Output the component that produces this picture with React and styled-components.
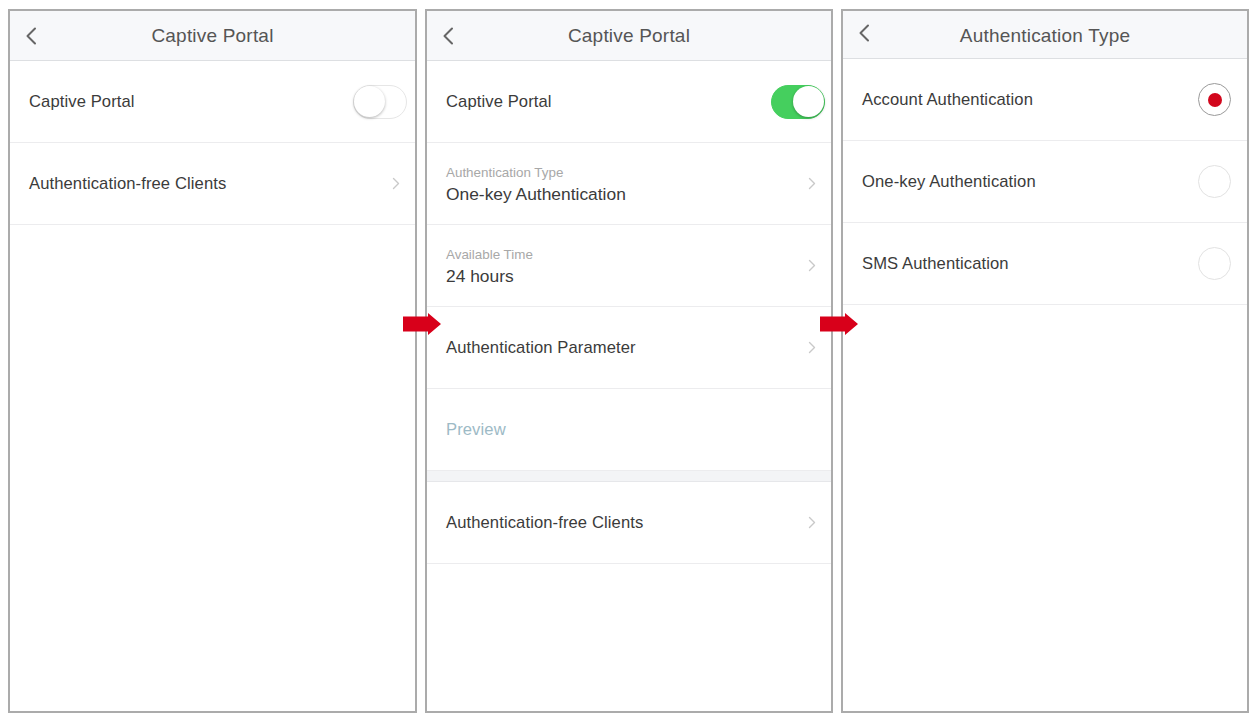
import React from "react";
import styled, { createGlobalStyle } from "styled-components";

const Global = createGlobalStyle`
  html, body { margin: 0; padding: 0; background: #ffffff; }
  body { font-family: "Liberation Sans", Arial, sans-serif; -webkit-font-smoothing: antialiased; }
  * { box-sizing: border-box; }
`;

const Page = styled.div`
  position: relative;
  width: 1254px;
  height: 715px;
  display: flex;
  gap: 8px;
  padding: 9px 0 0 8px;
`;

const Phone = styled.section`
  width: ${(p) => p.$w}px;
  height: 704px;
  border: 2px solid #ababab;
  background: #ffffff;
  display: flex;
  flex-direction: column;
  overflow: hidden;
`;

const Header = styled.header`
  flex: 0 0 auto;
  height: ${(p) => p.$h}px;
  background: #f7f8fa;
  border-bottom: 1px solid #dddfe2;
  display: grid;
  grid-template-columns: 44px 1fr 44px;
  align-items: center;
`;

const Back = styled.span`
  display: flex;
  align-items: center;
  padding-left: 15px;
  padding-bottom: ${(p) => p.$lift}px;
`;

const Title = styled.h1`
  margin: 0;
  text-align: center;
  font-size: 19px;
  font-weight: 400;
  color: #555;
  letter-spacing: 0.2px;
  padding-top: ${(p) => p.$drop}px;
`;

const Row = styled.div`
  flex: 0 0 auto;
  height: 82px;
  border-bottom: 1px solid #ececee;
  display: flex;
  align-items: center;
  justify-content: space-between;
  padding: 0 ${(p) => p.$pr}px 0 19px;
`;

const Label = styled.span`
  font-size: 16.6px;
  color: #3b3b3b;
  letter-spacing: 0.1px;
`;

const PreviewLabel = styled(Label)`
  color: #9dbac6;
`;

const Stack = styled.div`
  display: flex;
  flex-direction: column;
  gap: 4px;
  padding-top: 2px;
`;

const Caption = styled.span`
  font-size: 13.4px;
  color: #a8a8a8;
`;

const Value = styled.span`
  font-size: 17.4px;
  color: #3b3b3b;
`;

const Gap = styled.div`
  flex: 0 0 auto;
  height: 11px;
  background: #f3f4f6;
  border-bottom: 1px solid #e6e7ea;
`;

const Switch = styled.span`
  position: relative;
  width: 54px;
  height: 34px;
  border-radius: 17px;
  background: ${(p) => (p.$on ? "#45cf5e" : "#ffffff")};
  border: 1.5px solid ${(p) => (p.$on ? "#45cf5e" : "#e6e6e6")};
  flex: 0 0 auto;
`;

const Knob = styled.span`
  position: absolute;
  top: 0;
  ${(p) => (p.$on ? "right: 0;" : "left: 0;")}
  width: 31px;
  height: 31px;
  border-radius: 50%;
  background: #ffffff;
  box-shadow: 0 1px 3px rgba(0, 0, 0, 0.3);
`;

const Radio = styled.span`
  width: 33px;
  height: 33px;
  border-radius: 50%;
  border: 1.5px solid ${(p) => (p.$on ? "#9a9a9a" : "#e2e2e2")};
  display: flex;
  align-items: center;
  justify-content: center;
  flex: 0 0 auto;
`;

const Dot = styled.span`
  width: 14px;
  height: 14px;
  border-radius: 50%;
  background: #d2061c;
`;

const Arrow = styled.svg`
  position: absolute;
  top: 313px;
  left: ${(p) => p.$x}px;
`;

const BackIcon = () => (
  <svg width="12" height="18" viewBox="0 0 12 18">
    <path d="M10 1.5 L2.5 9 L10 16.5" fill="none" stroke="#666" strokeWidth="2" strokeLinecap="round" strokeLinejoin="round" />
  </svg>
);

const Chevron = () => (
  <svg width="8" height="13" viewBox="0 0 8 13">
    <path d="M1.5 1.5 L6.5 6.5 L1.5 11.5" fill="none" stroke="#c9c9c9" strokeWidth="1.4" strokeLinecap="round" strokeLinejoin="round" />
  </svg>
);

const RedArrow = ({ x }) => (
  <Arrow $x={x} width="38" height="22" viewBox="0 0 38 22">
    <polygon points="0,3.5 25,3.5 25,0 38,11 25,22 25,18.5 0,18.5" fill="#d8001a" />
  </Arrow>
);

const Head = ({ title, h = 50, lift = 0, drop = 0 }) => (
  <Header $h={h}>
    <Back $lift={lift}>
      <BackIcon />
    </Back>
    <Title $drop={drop}>{title}</Title>
    <span />
  </Header>
);

export default function App() {
  return (
    <>
      <Global />
      <Page>
        <Phone $w={409}>
          <Head title="Captive Portal" />
          <Row $pr={8}>
            <Label>Captive Portal</Label>
            <Switch>
              <Knob />
            </Switch>
          </Row>
          <Row $pr={15}>
            <Label>Authentication-free Clients</Label>
            <Chevron />
          </Row>
        </Phone>

        <Phone $w={408}>
          <Head title="Captive Portal" />
          <Row $pr={6}>
            <Label>Captive Portal</Label>
            <Switch $on>
              <Knob $on />
            </Switch>
          </Row>
          <Row $pr={15}>
            <Stack>
              <Caption>Authentication Type</Caption>
              <Value>One-key Authentication</Value>
            </Stack>
            <Chevron />
          </Row>
          <Row $pr={15}>
            <Stack>
              <Caption>Available Time</Caption>
              <Value>24 hours</Value>
            </Stack>
            <Chevron />
          </Row>
          <Row $pr={15}>
            <Label>Authentication Parameter</Label>
            <Chevron />
          </Row>
          <Row $pr={15}>
            <PreviewLabel>Preview</PreviewLabel>
          </Row>
          <Gap />
          <Row $pr={15}>
            <Label>Authentication-free Clients</Label>
            <Chevron />
          </Row>
        </Phone>

        <Phone $w={408}>
          <Head title="Authentication Type" h={48} lift={4} drop={2} />
          <Row $pr={16}>
            <Label>Account Authentication</Label>
            <Radio $on>
              <Dot />
            </Radio>
          </Row>
          <Row $pr={16}>
            <Label>One-key Authentication</Label>
            <Radio />
          </Row>
          <Row $pr={16}>
            <Label>SMS Authentication</Label>
            <Radio />
          </Row>
        </Phone>

        <RedArrow x={403} />
        <RedArrow x={820} />
      </Page>
    </>
  );
}
